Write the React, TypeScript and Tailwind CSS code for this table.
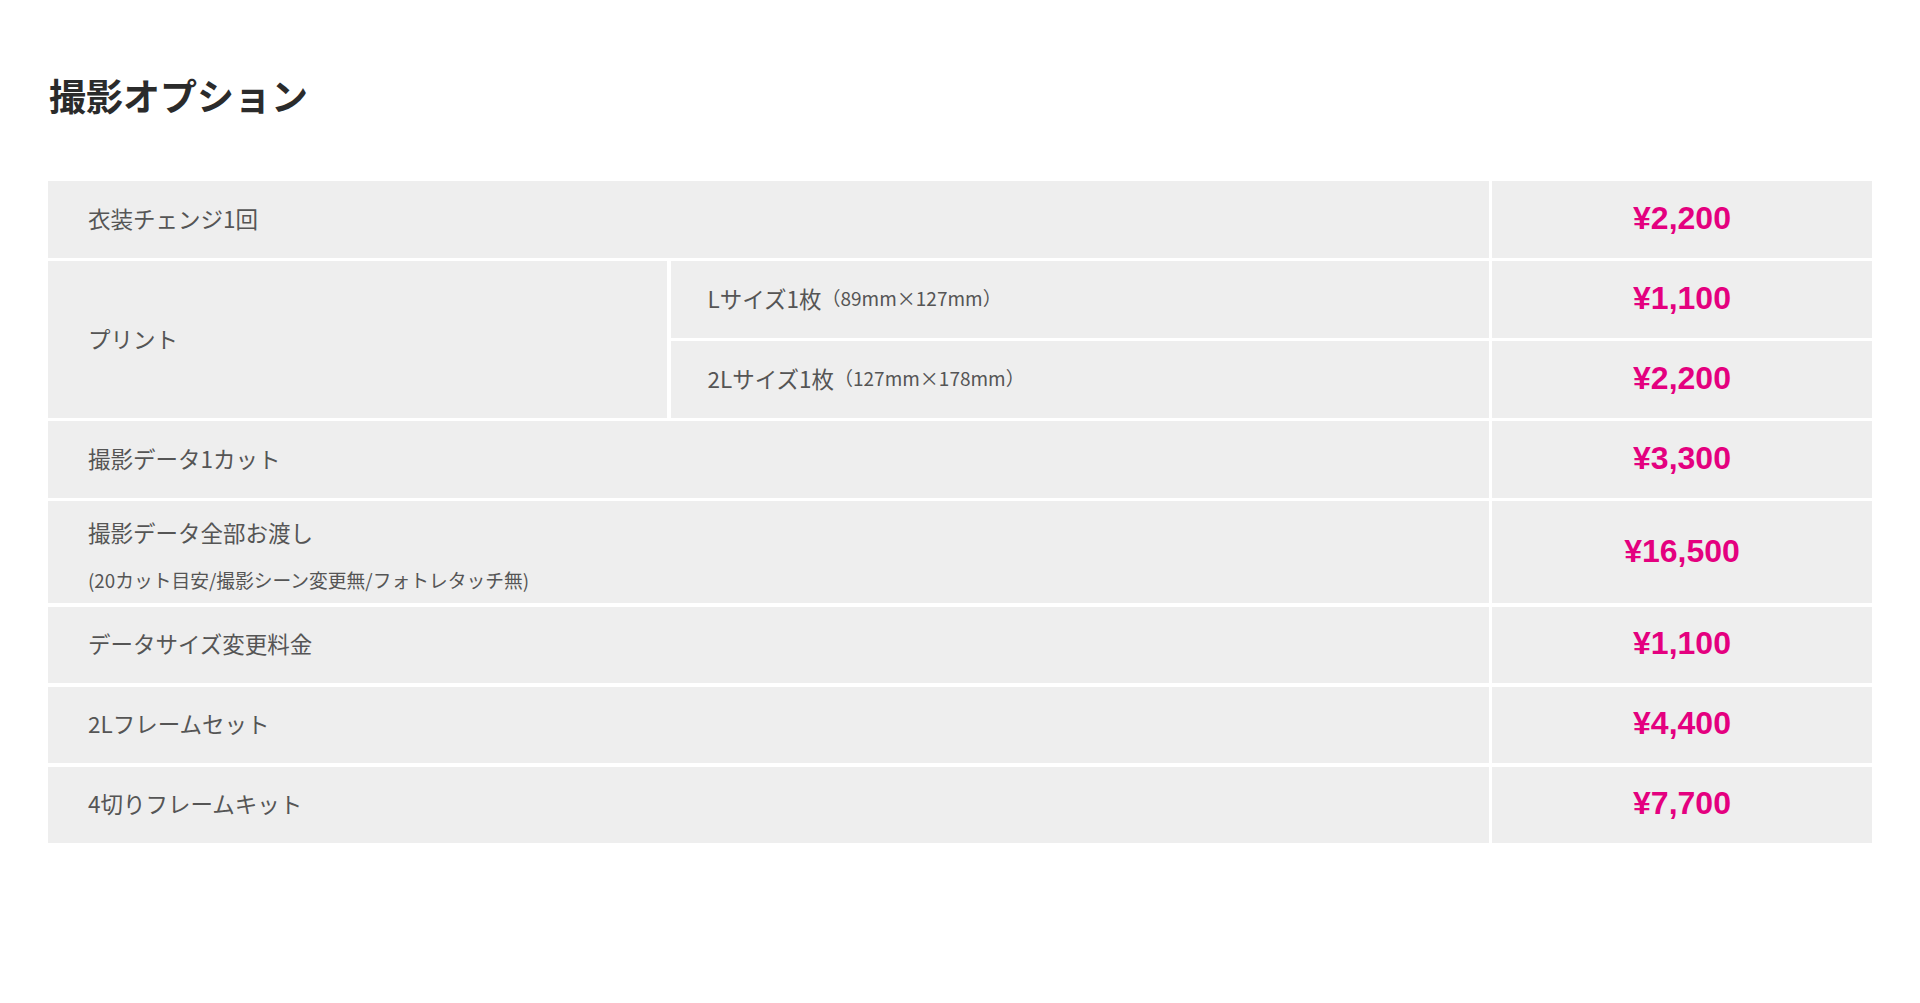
import React from 'react';

type Option = {
  label: string;
  note?: string;
  price: string;
  tall?: boolean;
};

const jp = { fontFamily: '"Noto Sans CJK JP", "Noto Sans", sans-serif' };
const num = { fontFamily: '"Liberation Sans", Arial, sans-serif' };

const cell = 'bg-[#eeeeee] flex items-center';
const labelText = 'text-[22.5px] text-[#555555] leading-none';
const priceCell = 'bg-[#eeeeee] flex items-center justify-center text-[32px] font-bold text-[#e4007f] pb-[3px]';

const topRows: Option[] = [{ label: '衣装チェンジ1回', price: '¥2,200' }];

const prints = [
  { label: 'Lサイズ1枚', note: '（89mm×127mm）', price: '¥1,100' },
  { label: '2Lサイズ1枚', note: '（127mm×178mm）', price: '¥2,200' },
];

const bottomRows: Option[] = [
  { label: '撮影データ1カット', price: '¥3,300' },
  { label: '撮影データ全部お渡し', note: '(20カット目安/撮影シーン変更無/フォトレタッチ無)', price: '¥16,500', tall: true },
  { label: 'データサイズ変更料金', price: '¥1,100' },
  { label: '2Lフレームセット', price: '¥4,400' },
  { label: '4切りフレームキット', price: '¥7,700' },
];

function Row({ option }: { option: Option }) {
  return (
    <>
      <div
        className={`${cell} col-span-2 pl-[40px] ${option.note ? 'flex-col items-start justify-center' : 'pb-[3px]'}`}
      >
        <span className={option.note ? 'text-[22.5px] text-[#555555] leading-[44px]' : labelText}>{option.label}</span>
        {option.note && (
          <span className="text-[18.75px] text-[#555555] leading-[28px] mt-[12px]">{option.note}</span>
        )}
      </div>
      <div className={priceCell} style={num}>
        {option.price}
      </div>
    </>
  );
}

export default function App() {
  return (
    <div className="min-h-screen bg-white px-[48px] pt-[68px] pb-[160px]" style={jp}>
      <h2 className="text-[37px] leading-[54px] font-bold text-[#2b2b2b] pl-[1px]">撮影オプション</h2>

      <div className="mt-[59px] grid grid-cols-[619px_1fr_380px] grid-rows-[76.5px_76.5px_76.5px_76.5px_102px_76.5px_76.5px_76.5px] gap-[3.5px]">
        {topRows.map((o) => (
          <Row key={o.label} option={o} />
        ))}

        {/* プリント spans both size rows */}
        <div className={`${cell} row-span-2 pl-[40px] pb-[3px]`}>
          <span className={labelText}>プリント</span>
        </div>
        {prints.map((p) => (
          <React.Fragment key={p.label}>
            <div className={`${cell} pl-[37px] pb-[3px]`}>
              <span className={labelText}>{p.label}</span>
              <span className="text-[19px] text-[#555555] leading-none">{p.note}</span>
            </div>
            <div className={priceCell} style={num}>
              {p.price}
            </div>
          </React.Fragment>
        ))}

        {bottomRows.map((o) => (
          <Row key={o.label} option={o} />
        ))}
      </div>
    </div>
  );
}
